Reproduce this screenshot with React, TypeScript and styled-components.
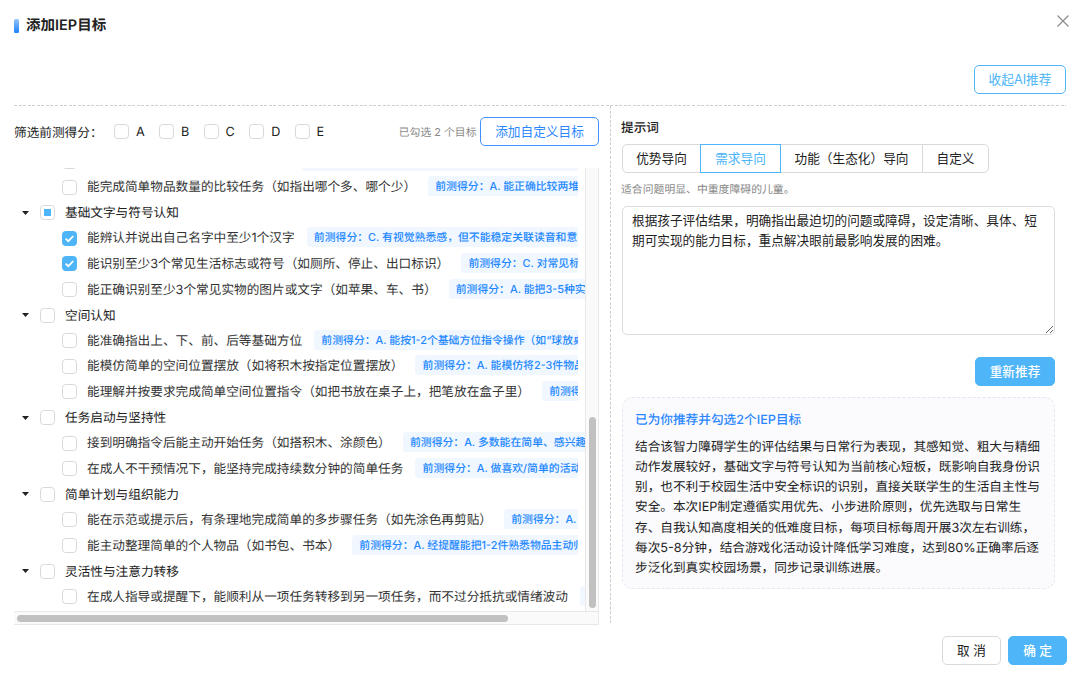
import React from 'react';
import styled, { createGlobalStyle, css } from 'styled-components';

const GlobalStyle = createGlobalStyle`
  * { box-sizing: border-box; }
  body {
    margin: 0;
    background: #fff;
    color: #222;
    font-family: Inter, "Noto Sans CJK SC", sans-serif;
    font-size: 12.67px;
    text-rendering: geometricPrecision;
    text-spacing-trim: space-all;
    overflow: hidden;
  }
  button, textarea { font: inherit; color: inherit; letter-spacing: inherit; }
`;

const Dialog = styled.div`
  width: 1080px;
  height: 675px;
  padding: 0 14px;
  display: flex;
  flex-direction: column;
  background: #fff;
`;

const Header = styled.header`
  height: 51px;
  display: flex;
  align-items: center;
  flex: none;
`;

const Accent = styled.span`
  width: 5px;
  height: 14px;
  margin-right: 7px;
  border-radius: 1.5px;
  background: linear-gradient(180deg, #96c6ff, #1a80ff);
`;

const Title = styled.h1`
  margin: 0;
  flex: 1;
  font-size: 14.5px;
  font-weight: 600;
  line-height: 21px;
`;

const CloseButton = styled.button`
  display: flex;
  margin: -9px -3px 0 0;
  padding: 0;
  border: 0;
  background: none;
  color: #8c8c8c;
`;

const Toolbar = styled.div`
  height: 55px;
  padding-top: 14px;
  display: flex;
  justify-content: flex-end;
  flex: none;
  background: repeating-linear-gradient(90deg, #cfcfcf 0 3px, transparent 3px 4.55px) left bottom / 100% 1px no-repeat;
`;

type Tone = 'default' | 'sky' | 'blue' | 'primary';

const tones = {
  default: css`border-color: #d9d9d9; color: #222; background: #fff;`,
  sky: css`border-color: #4db5f8; color: #4db5f8; background: #fff;`,
  blue: css`border-color: #3f92ff; color: #2b87ff; background: #fff;`,
  primary: css`border-color: #4db5f8; color: #fff; background: #4db5f8; font-weight: 500;`,
};

const Button = styled.button<{ $tone: Tone; $width: number }>`
  flex: none;
  width: ${(p) => p.$width}px;
  height: 29px;
  padding: 0;
  border: 1px solid;
  border-radius: 5px;
  line-height: 27px;
  white-space: nowrap;
  ${(p) => tones[p.$tone]}
`;

const Body = styled.main`
  height: 519px;
  display: flex;
  flex: none;
`;

const GoalPanel = styled.section`
  width: 585px;
  display: flex;
  flex-direction: column;
  flex: none;
`;

const FilterBar = styled.div`
  height: 51px;
  display: flex;
  align-items: center;
  flex: none;
`;

const FilterLabel = styled.span`
  width: 100px;
`;

const FilterOption = styled.label`
  display: flex;
  align-items: center;
  gap: 7px;
  margin-right: 14.3px;
`;

const Grade = styled.span`
  padding-top: 2px;
`;

const SelectedCount = styled.span`
  margin: 0 3.5px 0 auto;
  font-size: 10.85px;
  color: #888;
`;

const TreeFrame = styled.div`
  margin-top: 11px;
  height: 457px;
  display: grid;
  grid-template-columns: 571px 14px;
  grid-template-rows: 443px 14px;
`;

const TreeViewport = styled.div`
  overflow: hidden;
`;

const TreeContent = styled.div`
  margin-top: -19.2px;
`;

const TreeRow = styled.div<{ $level: number; $bleed?: boolean }>`
  height: 25.6px;
  width: ${(p) => (p.$bleed ? 571 : 564)}px;
  padding-left: ${(p) => (p.$level === 0 ? 8 : 48)}px;
  display: flex;
  align-items: center;
  overflow: hidden;
  white-space: nowrap;
`;

const Caret = styled.svg`
  flex: none;
  width: 7px;
  height: 4px;
  margin-right: 11px;
`;

const Box = styled.span<{ $filled?: boolean }>`
  flex: none;
  width: 15px;
  height: 15px;
  display: flex;
  align-items: center;
  justify-content: center;
  border: 1px solid ${(p) => (p.$filled ? '#4db5f8' : '#d9d9d9')};
  border-radius: 3.6px;
  background: ${(p) => (p.$filled ? '#4db5f8' : '#fff')};
`;

const PartialMark = styled.span`
  width: 7px;
  height: 7px;
  background: #4db5f8;
`;

const RowText = styled.span<{ $level: number }>`
  margin-left: 10px;
  padding-top: ${(p) => (p.$level === 0 ? 3 : 2)}px;
  flex: none;
  line-height: 20px;
  color: ${(p) => (p.$level === 0 ? '#222' : '#333')};
`;

const ScoreTag = styled.span`
  flex: none;
  height: 20px;
  margin: -2px 0 0 12px;
  padding: 0 7.2px;
  border-radius: 3.6px;
  background: #f0f7ff;
  color: #2388ff;
  font-size: 10.85px;
  font-weight: 500;
  line-height: 20px;
`;

const VerticalTrack = styled.div`
  padding: 249px 2px 0 3px;
  border: solid #e8e8e8;
  border-width: 0 1px;
  background: #fafafa;
`;

const VerticalThumb = styled.div`
  height: 191px;
  border-radius: 4px;
  background: #c1c1c1;
`;

const HorizontalTrack = styled.div`
  grid-column: 1 / 3;
  padding: 3px 0 0 3px;
  border: solid #e8e8e8;
  border-width: 1px 1px 1px 0;
  background: #fafafa;
`;

const HorizontalThumb = styled.div`
  width: 491px;
  height: 7px;
  border-radius: 4px;
  background: #c1c1c1;
`;

const PromptPanel = styled.section`
  flex: 1;
  margin-left: 11px;
  padding: 13px 0 0 12px;
  display: flex;
  flex-direction: column;
  align-items: flex-start;
  background: repeating-linear-gradient(180deg, #cfcfcf 0 3px, transparent 3px 4.55px) left top / 1px 100% no-repeat;
`;

const PromptTitle = styled.h2`
  margin: 0 0 5px -1px;
  font-size: 12.67px;
  font-weight: 500;
  line-height: 20px;
`;

const Segments = styled.div`
  height: 29px;
  display: flex;
  flex: none;
`;

const Segment = styled.button<{ $width: number; $active?: boolean }>`
  width: ${(p) => p.$width}px;
  padding: 0;
  margin-right: -1px;
  border: 1px solid ${(p) => (p.$active ? '#4db5f8' : '#d9d9d9')};
  color: ${(p) => (p.$active ? '#4db5f8' : '#222')};
  z-index: ${(p) => (p.$active ? 1 : 0)};
  background: #fff;
  line-height: 27px;
  white-space: nowrap;
  &:first-child { border-radius: 5px 0 0 5px; }
  &:last-child { border-radius: 0 5px 5px 0; margin-right: 0; }
`;

const Hint = styled.p`
  margin: 7px 0 8px -1px;
  font-size: 10.85px;
  line-height: 18px;
  color: #888;
`;

const PromptInput = styled.textarea`
  display: block;
  flex: none;
  width: 433px;
  height: 129px;
  padding: 4px 9px;
  border: 1px solid #dcdcdc;
  border-radius: 5px;
  background: #fff;
  line-height: 20px;
  white-space: pre;
  overflow: hidden;
  resize: vertical;
  outline: none;
`;

const RetryRow = styled.div`
  width: 433px;
  margin: 22px 0 11px;
  display: flex;
  justify-content: flex-end;
`;

const AdviceCard = styled.article`
  width: 433px;
  height: 192px;
  padding: 13px 12px 0;
  border: 1px dashed #e4e6f0;
  border-radius: 10px;
  background: #fbfbfe;
`;

const AdviceTitle = styled.h3`
  margin: 0 0 7.2px;
  font-size: 12.67px;
  font-weight: 500;
  line-height: 20px;
  color: #2b87ff;
`;

const AdviceText = styled.p`
  margin: 0;
  line-height: 20.1px;
  white-space: pre;
`;

const Footer = styled.footer`
  margin: 11px -1px 0 0;
  display: flex;
  justify-content: flex-end;
  gap: 7px;
`;

type State = 'off' | 'on' | 'partial';

function Checkbox({ state = 'off' }: { state?: State }) {
  return (
    <Box $filled={state === 'on'}>
      {state === 'partial' && <PartialMark />}
      {state === 'on' && (
        <svg width="11" height="11" viewBox="0 0 11 11" fill="none">
          <path d="M1.6 5.6 4.3 8.2 9.3 3" stroke="#fff" strokeWidth="1.8" />
        </svg>
      )}
    </Box>
  );
}

interface Node {
  text: string;
  level: 0 | 1;
  state?: State;
  tag?: string;
  bleed?: boolean;
}

const nodes: Node[] = [
  { level: 1, text: '能按顺序点数十以内的物品并说总数', tag: 'A. 能点数十以内的物品并说出总数，并能按数取物' },
  { level: 1, text: '能完成简单物品数量的比较任务（如指出哪个多、哪个少）', tag: 'A. 能正确比较两堆物品的多少' },
  { level: 0, text: '基础文字与符号认知', state: 'partial' },
  { level: 1, text: '能辨认并说出自己名字中至少1个汉字', state: 'on', tag: 'C. 有视觉熟悉感，但不能稳定关联读音和意义' },
  { level: 1, text: '能识别至少3个常见生活标志或符号（如厕所、停止、出口标识）', state: 'on', tag: 'C. 对常见标志有反应' },
  { level: 1, text: '能正确识别至少3个常见实物的图片或文字（如苹果、车、书）', tag: 'A. 能把3-5种实物与图片配对', bleed: true },
  { level: 0, text: '空间认知' },
  { level: 1, text: '能准确指出上、下、前、后等基础方位', tag: 'A. 能按1-2个基础方位指令操作（如“球放桌上”）' },
  { level: 1, text: '能模仿简单的空间位置摆放（如将积木按指定位置摆放）', tag: 'A. 能模仿将2-3件物品摆放' },
  { level: 1, text: '能理解并按要求完成简单空间位置指令（如把书放在桌子上，把笔放在盒子里）', tag: 'A. 能完成指令' },
  { level: 0, text: '任务启动与坚持性' },
  { level: 1, text: '接到明确指令后能主动开始任务（如搭积木、涂颜色）', tag: 'A. 多数能在简单、感兴趣的任务中开始', bleed: true },
  { level: 1, text: '在成人不干预情况下，能坚持完成持续数分钟的简单任务', tag: 'A. 做喜欢/简单的活动时能坚持' },
  { level: 0, text: '简单计划与组织能力' },
  { level: 1, text: '能在示范或提示后，有条理地完成简单的多步骤任务（如先涂色再剪贴）', tag: 'A. 能完成两步任务' },
  { level: 1, text: '能主动整理简单的个人物品（如书包、书本）', tag: 'A. 经提醒能把1-2件熟悉物品主动归位' },
  { level: 0, text: '灵活性与注意力转移' },
  { level: 1, text: '在成人指导或提醒下，能顺利从一项任务转移到另一项任务，而不过分抵抗或情绪波动', tag: 'A. 能顺利转移', bleed: true },
];

const advice = [
  '结合该智力障碍学生的评估结果与日常行为表现，其感知觉、粗大与精细',
  '动作发展较好，基础文字与符号认知为当前核心短板，既影响自我身份识',
  '别，也不利于校园生活中安全标识的识别，直接关联学生的生活自主性与',
  '安全。本次IEP制定遵循实用优先、小步进阶原则，优先选取与日常生',
  '存、自我认知高度相关的低难度目标，每项目标每周开展3次左右训练，',
  '每次5-8分钟，结合游戏化活动设计降低学习难度，达到80%正确率后逐',
  '步泛化到真实校园场景，同步记录训练进展。',
].join('\n');

const prompt = [
  '根据孩子评估结果，明确指出最迫切的问题或障碍，设定清晰、具体、短',
  '期可实现的能力目标，重点解决眼前最影响发展的困难。',
].join('\n');

export default function App() {
  return (
    <>
      <GlobalStyle />
      <Dialog lang="zh-CN">
        <Header>
          <Accent />
          <Title>添加IEP目标</Title>
          <CloseButton aria-label="关闭">
            <svg width="12" height="12" viewBox="0 0 12 12" stroke="currentColor" strokeWidth="1.2">
              <path d="M.5.5 11.5 11.5M11.5.5.5 11.5" />
            </svg>
          </CloseButton>
        </Header>
        <Toolbar>
          <Button $tone="sky" $width={92}>收起AI推荐</Button>
        </Toolbar>
        <Body>
          <GoalPanel>
            <FilterBar>
              <FilterLabel>筛选前测得分：</FilterLabel>
              {['A', 'B', 'C', 'D', 'E'].map((grade) => (
                <FilterOption key={grade}>
                  <Checkbox />
                  <Grade>{grade}</Grade>
                </FilterOption>
              ))}
              <SelectedCount>已勾选 2 个目标</SelectedCount>
              <Button $tone="blue" $width={119}>添加自定义目标</Button>
            </FilterBar>
            <TreeFrame>
              <TreeViewport>
                <TreeContent>
                  {nodes.map((node) => (
                    <TreeRow key={node.text} $level={node.level} $bleed={node.bleed}>
                      {node.level === 0 && (
                        <Caret viewBox="0 0 7 4">
                          <path d="M0 0h7L3.5 4z" fill="#222" />
                        </Caret>
                      )}
                      <Checkbox state={node.state} />
                      <RowText $level={node.level}>{node.text}</RowText>
                      {node.tag && <ScoreTag>前测得分：{node.tag}</ScoreTag>}
                    </TreeRow>
                  ))}
                </TreeContent>
              </TreeViewport>
              <VerticalTrack>
                <VerticalThumb />
              </VerticalTrack>
              <HorizontalTrack>
                <HorizontalThumb />
              </HorizontalTrack>
            </TreeFrame>
          </GoalPanel>
          <PromptPanel>
            <PromptTitle>提示词</PromptTitle>
            <Segments>
              <Segment $width={79}>优势导向</Segment>
              <Segment $width={81} $active>需求导向</Segment>
              <Segment $width={143}>功能（生态化）导向</Segment>
              <Segment $width={67}>自定义</Segment>
            </Segments>
            <Hint>适合问题明显、中重度障碍的儿童。</Hint>
            <PromptInput defaultValue={prompt} spellCheck={false} />
            <RetryRow>
              <Button $tone="primary" $width={80}>重新推荐</Button>
            </RetryRow>
            <AdviceCard>
              <AdviceTitle>已为你推荐并勾选2个IEP目标</AdviceTitle>
              <AdviceText>{advice}</AdviceText>
            </AdviceCard>
          </PromptPanel>
        </Body>
        <Footer>
          <Button $tone="default" $width={59}>取 消</Button>
          <Button $tone="primary" $width={59}>确 定</Button>
        </Footer>
      </Dialog>
    </>
  );
}
